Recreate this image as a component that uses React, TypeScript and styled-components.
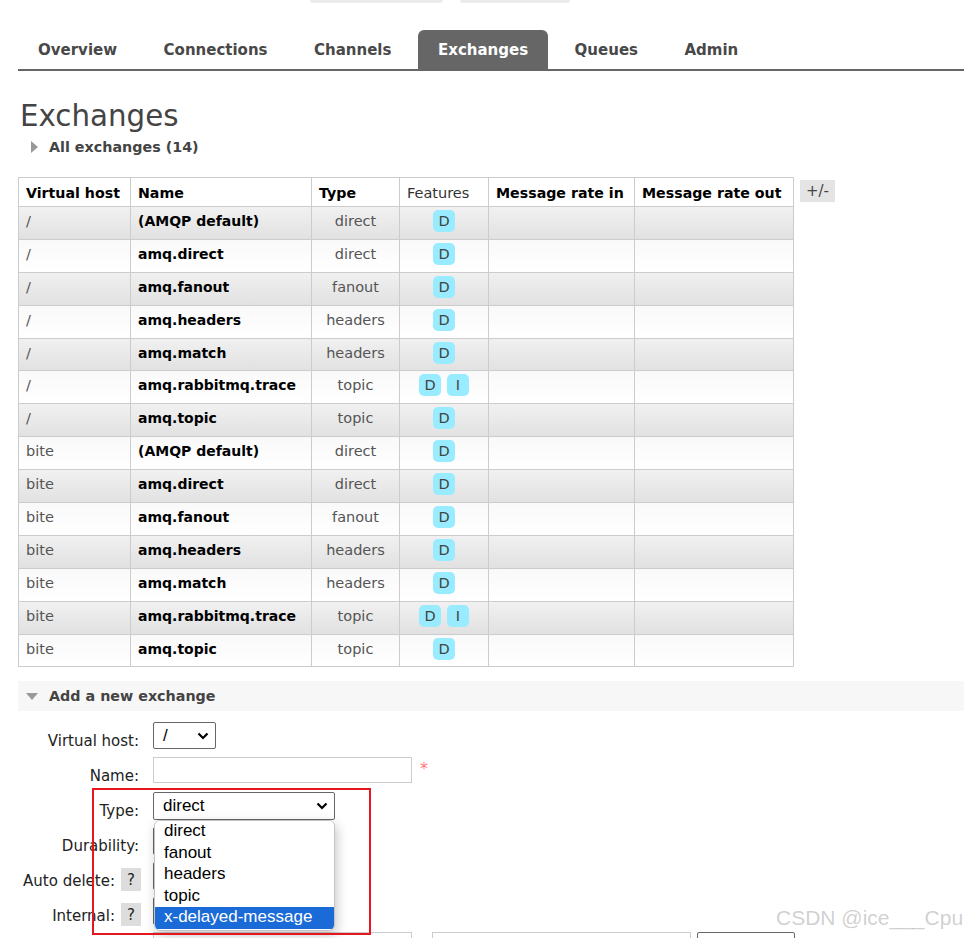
import styled, { createGlobalStyle } from 'styled-components';

const GlobalStyle = createGlobalStyle`
  html, body {
    margin: 0;
    padding: 0;
    background: #fff;
    overflow: hidden;
  }
  body {
    font-family: "DejaVu Sans", Verdana, sans-serif;
    color: #484848;
  }
`;

const Page = styled.div`
  position: relative;
  padding-left: 18px;
  min-height: 938px;
`;

const TopStrip = styled.div`
  height: 30px;
  display: flex;
  gap: 17px;
  padding-left: 292px;
`;

const Pill = styled.div<{ $w: number }>`
  width: ${({ $w }) => $w}px;
  height: 3px;
  background: #ececec;
  border-radius: 0 0 5px 5px;
`;

const Tabs = styled.ul`
  list-style: none;
  margin: 0;
  padding: 0;
  display: flex;
  gap: 7px;
  border-bottom: 2px solid #666;
`;

const Tab = styled.li<{ $active?: boolean }>`
  height: 39px;
  line-height: 40px;
  padding: 0 19.5px 0 20px;
  font-size: 15px;
  font-weight: bold;
  color: ${({ $active }) => ($active ? '#fff' : '#484848')};
  background: ${({ $active }) => ($active ? '#666' : 'transparent')};
  border-radius: 6px 6px 0 0;
`;

const Title = styled.h1`
  margin: 27px 0 0 2px;
  font-size: 29.3px;
  line-height: 36px;
  font-weight: normal;
  color: #444;
`;

const SectionToggle = styled.div<{ $bar?: boolean }>`
  display: flex;
  align-items: center;
  gap: 11px;
  height: ${({ $bar }) => ($bar ? '30px' : '20px')};
  margin-top: ${({ $bar }) => ($bar ? '0' : '3px')};
  padding-left: ${({ $bar }) => ($bar ? '8px' : '13px')};
  background: ${({ $bar }) => ($bar ? '#f7f7f7' : 'transparent')};
  font-size: 14.3px;
  font-weight: bold;
  color: #444;
`;

const TableWrap = styled.div`
  display: flex;
  align-items: flex-start;
  gap: 6px;
  margin-top: 20px;
`;

const Table = styled.table`
  border-collapse: collapse;
  table-layout: fixed;
  width: 775px;
  font-size: 14.5px;
`;

const Th = styled.th<{ $normal?: boolean }>`
  border: 1px solid #ccc;
  padding: 5px 7px 3px;
  line-height: 20px;
  text-align: left;
  white-space: nowrap;
  font-size: ${({ $normal }) => ($normal ? '14.5px' : '14.2px')};
  font-weight: ${({ $normal }) => ($normal ? 'normal' : 'bold')};
  color: ${({ $normal }) => ($normal ? '#333' : '#000')};
`;

const Row = styled.tr<{ $alt: boolean }>`
  background: ${({ $alt }) =>
    $alt ? 'linear-gradient(#f1f1f1, #e1e1e1)' : 'linear-gradient(#f9f9f9, #fff)'};
`;

const Td = styled.td<{ $kind?: 'name' | 'center' }>`
  border: 1px solid #ccc;
  padding: 3px 7px 6.9px;
  line-height: 22px;
  vertical-align: top;
  white-space: nowrap;
  text-align: ${({ $kind }) => ($kind === 'center' ? 'center' : 'left')};
  font-weight: ${({ $kind }) => ($kind === 'name' ? 'bold' : 'normal')};
  font-size: ${({ $kind }) => ($kind === 'name' ? '14px' : '14.5px')};
  color: ${({ $kind }) => ($kind === 'name' ? '#000' : '#555')};
`;

const Badges = styled.span`
  display: inline-flex;
  gap: 6px;
  vertical-align: top;
`;

const Badge = styled.span`
  display: inline-block;
  min-width: 12px;
  height: 22px;
  line-height: 23px;
  padding: 0 5px;
  border-radius: 5px;
  background: #99ebff;
  color: #444;
  font-size: 14.5px;
`;

const ToggleColumns = styled.span`
  margin-top: 3px;
  padding: 0 6px;
  height: 22px;
  line-height: 22px;
  background: #e4e4e4;
  font-size: 15px;
  color: #444;
`;

const AddSection = styled.div`
  margin-top: 14px;
`;

const Form = styled.div`
  display: grid;
  grid-template-columns: 123px 1fr;
  grid-auto-rows: 28px;
  column-gap: 12px;
  row-gap: 7px;
  margin-top: 11px;
`;

const Label = styled.div`
  display: flex;
  justify-content: flex-end;
  align-items: flex-start;
  gap: 6px;
  font-size: 15px;
  color: #222;
`;

const LabelText = styled.span<{ $pad?: boolean }>`
  padding-top: 9px;
  line-height: 20px;
  padding-right: ${({ $pad }) => ($pad ? '2px' : '0')};
`;

const Help = styled.span`
  margin-top: 6px;
  width: 20px;
  height: 23px;
  line-height: 24px;
  text-align: center;
  background: #ddd;
  font-size: 15px;
`;

const Field = styled.div`
  position: relative;
  display: flex;
  align-items: flex-start;
`;

const SelectBox = styled.div<{ $w: number; $h?: number; $ml?: number }>`
  box-sizing: border-box;
  width: ${({ $w }) => $w}px;
  height: ${({ $h }) => $h ?? 28}px;
  margin-left: ${({ $ml }) => $ml ?? 0}px;
  border: 1px solid #666;
  border-radius: 2px;
  background: #fff;
  display: flex;
  align-items: center;
  justify-content: space-between;
  padding: 0 6px 0 9px;
  font-family: "Liberation Sans", Arial, sans-serif;
  font-size: 17px;
  color: #000;
`;

const Input = styled.div<{ $w: number; $ml?: number }>`
  box-sizing: border-box;
  width: ${({ $w }) => $w}px;
  height: 26px;
  margin-left: ${({ $ml }) => $ml ?? 0}px;
  border: 1px solid #ccc;
  background: #fff;
`;

const Required = styled.span`
  margin-left: 8px;
  color: #f77;
  font-size: 16px;
  line-height: 24px;
`;

const Dropdown = styled.ul`
  position: absolute;
  left: 1px;
  top: 28px;
  width: 179px;
  margin: 0;
  padding: 0 0 1px;
  list-style: none;
  background: #fff;
  border: 1px solid #c4c4c4;
  border-radius: 6px;
  box-shadow: 2px 4px 12px rgba(0, 0, 0, 0.22);
  overflow: hidden;
  z-index: 2;
  font-family: "Liberation Sans", Arial, sans-serif;
  font-size: 17px;
`;

const Option = styled.li<{ $selected?: boolean }>`
  height: 21.5px;
  line-height: 19.5px;
  padding-left: 9px;
  color: ${({ $selected }) => ($selected ? '#fff' : '#000')};
  background: ${({ $selected }) => ($selected ? '#1a6ad8' : '#fff')};
`;

const Annotation = styled.div`
  position: absolute;
  left: 92px;
  top: 788px;
  width: 275px;
  height: 143px;
  border: 2px solid #e5161e;
  z-index: 3;
  pointer-events: none;
`;

const Watermark = styled.div`
  position: absolute;
  left: 776px;
  top: 906px;
  font-family: "Liberation Sans", Arial, sans-serif;
  font-size: 21px;
  color: rgba(150, 150, 150, 0.45);
  white-space: nowrap;
  z-index: 3;
`;

const Chevron = () => (
  <svg width="12" height="8" viewBox="0 0 12 8">
    <path d="M1.5 1.5 L6 6 L10.5 1.5" fill="none" stroke="#000" strokeWidth="2.2" />
  </svg>
);

const Arrow = ({ down }: { down?: boolean }) =>
  down ? (
    <svg width="12" height="7" viewBox="0 0 12 7">
      <polygon points="0,0 12,0 6,7" fill="#999" />
    </svg>
  ) : (
    <svg width="7" height="12" viewBox="0 0 7 12">
      <polygon points="0,0 7,6 0,12" fill="#999" />
    </svg>
  );

type Exchange = [string, string, string, string[]];

const exchanges: Exchange[] = [
  ['/', '(AMQP default)', 'direct', ['D']],
  ['/', 'amq.direct', 'direct', ['D']],
  ['/', 'amq.fanout', 'fanout', ['D']],
  ['/', 'amq.headers', 'headers', ['D']],
  ['/', 'amq.match', 'headers', ['D']],
  ['/', 'amq.rabbitmq.trace', 'topic', ['D', 'I']],
  ['/', 'amq.topic', 'topic', ['D']],
  ['bite', '(AMQP default)', 'direct', ['D']],
  ['bite', 'amq.direct', 'direct', ['D']],
  ['bite', 'amq.fanout', 'fanout', ['D']],
  ['bite', 'amq.headers', 'headers', ['D']],
  ['bite', 'amq.match', 'headers', ['D']],
  ['bite', 'amq.rabbitmq.trace', 'topic', ['D', 'I']],
  ['bite', 'amq.topic', 'topic', ['D']],
];

const tabs = ['Overview', 'Connections', 'Channels', 'Exchanges', 'Queues', 'Admin'];
const types = ['direct', 'fanout', 'headers', 'topic', 'x-delayed-message'];

export default function App() {
  return (
    <Page>
      <GlobalStyle />
      <TopStrip>
        <Pill $w={133} />
        <Pill $w={110} />
      </TopStrip>

      <Tabs>
        {tabs.map((t) => (
          <Tab key={t} $active={t === 'Exchanges'}>
            {t}
          </Tab>
        ))}
      </Tabs>

      <Title>Exchanges</Title>
      <SectionToggle>
        <Arrow />
        All exchanges (14)
      </SectionToggle>

      <TableWrap>
        <Table>
          <colgroup>
            <col style={{ width: 112 }} />
            <col style={{ width: 181 }} />
            <col style={{ width: 88 }} />
            <col style={{ width: 89 }} />
            <col style={{ width: 146 }} />
            <col style={{ width: 159 }} />
          </colgroup>
          <thead>
            <tr>
              <Th>Virtual host</Th>
              <Th>Name</Th>
              <Th>Type</Th>
              <Th $normal>Features</Th>
              <Th>Message rate in</Th>
              <Th>Message rate out</Th>
            </tr>
          </thead>
          <tbody>
            {exchanges.map(([vhost, name, type, features], i) => (
              <Row key={i} $alt={i % 2 === 0}>
                <Td>{vhost}</Td>
                <Td $kind="name">{name}</Td>
                <Td $kind="center">{type}</Td>
                <Td $kind="center">
                  <Badges>
                    {features.map((f) => (
                      <Badge key={f}>{f}</Badge>
                    ))}
                  </Badges>
                </Td>
                <Td />
                <Td />
              </Row>
            ))}
          </tbody>
        </Table>
        <ToggleColumns>+/-</ToggleColumns>
      </TableWrap>

      <AddSection>
        <SectionToggle $bar>
          <Arrow down />
          Add a new exchange
        </SectionToggle>

        <Form>
          <Label>
            <LabelText $pad>Virtual host:</LabelText>
          </Label>
          <Field>
            <SelectBox $w={63} $h={27}>
              <span>/</span>
              <Chevron />
            </SelectBox>
          </Field>

          <Label>
            <LabelText $pad>Name:</LabelText>
          </Label>
          <Field>
            <Input $w={259} />
            <Required>*</Required>
          </Field>

          <Label>
            <LabelText $pad>Type:</LabelText>
          </Label>
          <Field>
            <SelectBox $w={182}>
              <span>direct</span>
              <Chevron />
            </SelectBox>
            <Dropdown>
              {types.map((t) => (
                <Option key={t} $selected={t === 'x-delayed-message'}>
                  {t}
                </Option>
              ))}
            </Dropdown>
          </Field>

          <Label>
            <LabelText $pad>Durability:</LabelText>
          </Label>
          <Field>
            <SelectBox $w={100} />
          </Field>

          <Label>
            <LabelText>Auto delete:</LabelText>
            <Help>?</Help>
          </Label>
          <Field>
            <SelectBox $w={70} />
          </Field>

          <Label>
            <LabelText>Internal:</LabelText>
            <Help>?</Help>
          </Label>
          <Field>
            <SelectBox $w={70} />
          </Field>

          <Label />
          <Field>
            <Input $w={259} />
            <Input $w={259} $ml={20} />
            <SelectBox $w={98} $ml={6} />
          </Field>
        </Form>
      </AddSection>

      <Annotation />
      <Watermark>CSDN @ice___Cpu</Watermark>
    </Page>
  );
}
